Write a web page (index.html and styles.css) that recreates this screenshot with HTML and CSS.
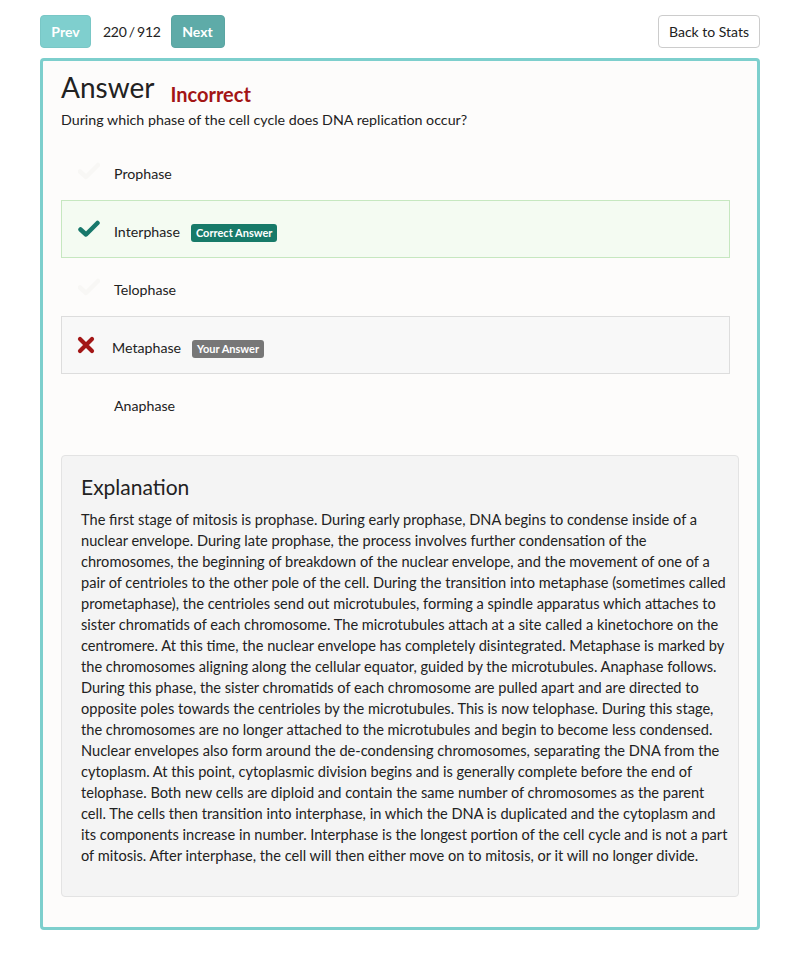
FILE: index.html
```html
<!DOCTYPE html>
<html>
<head>
<meta charset="utf-8">
<link rel="stylesheet" href="styles.css">
</head>
<body>
<div class="page">
  <div class="topbar">
    <div class="nav">
      <button class="btn btn-prev">Prev</button>
      <span class="counter">220 / 912</span>
      <button class="btn btn-next">Next</button>
    </div>
    <button class="btn btn-back">Back to Stats</button>
  </div>
  <div class="card">
    <div class="title-row">
      <h1 class="title">Answer</h1>
      <span class="verdict">Incorrect</span>
    </div>
    <p class="question">During which phase of the cell cycle does DNA replication occur?</p>
    <ul class="options">
      <li class="option">
        <span class="icon"><svg width="22" height="18" viewBox="0 0 22 18"><path d="M2 9.5 L8 15 L20 3" fill="none" stroke="#f8f7f5" stroke-width="4.5" stroke-linecap="round" stroke-linejoin="round"/></svg></span>
        <span class="label">Prophase</span>
      </li>
      <li class="option correct">
        <span class="icon"><svg width="22" height="18" viewBox="0 0 22 18"><path d="M2.5 9.5 L8 14.5 L19.5 3" fill="none" stroke="#17786b" stroke-width="4.5" stroke-linecap="round" stroke-linejoin="round"/></svg></span>
        <span class="label">Interphase</span>
        <span class="badge badge-correct">Correct Answer</span>
      </li>
      <li class="option">
        <span class="icon"><svg width="22" height="18" viewBox="0 0 22 18"><path d="M2 9.5 L8 15 L20 3" fill="none" stroke="#f8f7f5" stroke-width="4.5" stroke-linecap="round" stroke-linejoin="round"/></svg></span>
        <span class="label">Telophase</span>
      </li>
      <li class="option wrong">
        <span class="icon icon-x"><svg width="18" height="18" viewBox="0 0 18 18"><path d="M3 3 L15 15 M15 3 L3 15" fill="none" stroke="#a31616" stroke-width="4.2" stroke-linecap="round"/></svg></span>
        <span class="label">Metaphase</span>
        <span class="badge badge-yours">Your Answer</span>
      </li>
      <li class="option">
        <span class="icon"></span>
        <span class="label">Anaphase</span>
      </li>
    </ul>
    <div class="explanation">
      <h2 class="exp-title">Explanation</h2>
      <p class="exp-text">The first stage of mitosis is prophase. During early prophase, DNA begins to condense inside of a nuclear envelope. During late prophase, the process involves further condensation of the chromosomes, the beginning of breakdown of the nuclear envelope, and the movement of one of a pair of centrioles to the other pole of the cell. During the transition into metaphase (sometimes called prometaphase), the centrioles send out microtubules, forming a spindle apparatus which attaches to sister chromatids of each chromosome. The microtubules attach at a site called a kinetochore on the centromere. At this time, the nuclear envelope has completely disintegrated. Metaphase is marked by the chromosomes aligning along the cellular equator, guided by the microtubules. Anaphase follows. During this phase, the sister chromatids of each chromosome are pulled apart and are directed to opposite poles towards the centrioles by the microtubules. This is now telophase. During this stage, the chromosomes are no longer attached to the microtubules and begin to become less condensed. Nuclear envelopes also form around the de-condensing chromosomes, separating the DNA from the cytoplasm. At this point, cytoplasmic division begins and is generally complete before the end of telophase. Both new cells are diploid and contain the same number of chromosomes as the parent cell. The cells then transition into interphase, in which the DNA is duplicated and the cytoplasm and its components increase in number. Interphase is the longest portion of the cell cycle and is not a part of mitosis. After interphase, the cell will then either move on to mitosis, or it will no longer divide.</p>
    </div>
  </div>
</div>
</body>
</html>
```
FILE: styles.css
```css
* { box-sizing: border-box; }
html, body { margin: 0; padding: 0; background: #ffffff; }
body {
  font-family: Lato, "Open Sans", sans-serif;
  font-size: 14px;
  color: #222;
}
.page {
  padding: 14px 40px 0 40px;
}
.topbar {
  display: flex;
  justify-content: space-between;
  align-items: center;
  height: 34px;
  margin-bottom: 10px;
}
.nav {
  display: flex;
  align-items: center;
}
.btn {
  font-family: Lato, sans-serif;
  font-size: 14px;
  border-radius: 4px;
  border: 1px solid transparent;
  height: 33px;
  padding: 0 12px;
  cursor: pointer;
}
.btn-prev {
  background: #7fcfce;
  color: #fff;
  font-weight: bold;
  border-color: #79c7c6;
  width: 51px;
  padding: 0;
}
.btn-next {
  background: #5eaba8;
  color: #fff;
  font-weight: bold;
  border-color: #5aa5a2;
  width: 54px;
  padding: 0;
}
.counter {
  font-size: 14px;
  color: #222;
  margin: 0 10px 0 12px;
  letter-spacing: -0.3px;
  word-spacing: -1px;
}
.btn-back {
  background: #fff;
  color: #222;
  border-color: #ccc;
  width: 102px;
  height: 33px;
  padding: 0;
}
.card {
  border: 3px solid #7dcfcd;
  border-radius: 4px;
  background: #fdfcfb;
  padding: 8px 18px 30px 18px;
}
.title-row {
  display: flex;
  align-items: baseline;
  height: 40px;
}
.title {
  font-size: 28px;
  font-weight: normal;
  color: #222;
  margin: 0;
  line-height: 40px;
  position: relative;
  top: -2px;
}
.verdict {
  color: #a31515;
  font-weight: bold;
  font-size: 20px;
  margin-left: 16px;
  position: relative;
  top: 2px;
}
.question {
  margin: 1px 0 12px 0;
  line-height: 20px;
  font-size: 14.25px;
}
.options {
  list-style: none;
  margin: 0 9px 23px 0;
  padding: 0;
}
.option {
  display: flex;
  align-items: center;
  height: 58px;
  border: 1px solid transparent;
  padding-left: 16px;
  padding-top: 5px;
}
.option.correct {
  background: #f4fbf2;
  border-color: #c6e7c0;
}
.option.wrong {
  background: #f8f8f8;
  border-color: #dddddd;
}
.icon {
  width: 36px;
  display: flex;
  align-items: center;
  position: relative;
  top: -3px;
}
.icon-x { width: 34px; left: -1px; }
.label {
  font-size: 14.2px;
  color: #222;
}
.badge {
  display: inline-block;
  margin-left: 11px;
  font-size: 11px;
  font-weight: bold;
  color: #fff;
  border-radius: 3px;
  padding: 2px 5px;
  line-height: 14px;
  position: relative;
  top: 1px;
}
.badge-correct { background: #177a69; }
.badge-yours { background: #777777; }
.explanation {
  background: #f4f4f4;
  border: 1px solid #e3e3e3;
  border-radius: 4px;
  padding: 18px 8px 30px 19px;
}
.exp-title {
  font-size: 21px;
  font-weight: normal;
  margin: 0 0 9px 0;
  line-height: 26px;
  color: #222;
}
.exp-text {
  margin: 0;
  line-height: 21px;
  font-size: 14.6px;
}
```
